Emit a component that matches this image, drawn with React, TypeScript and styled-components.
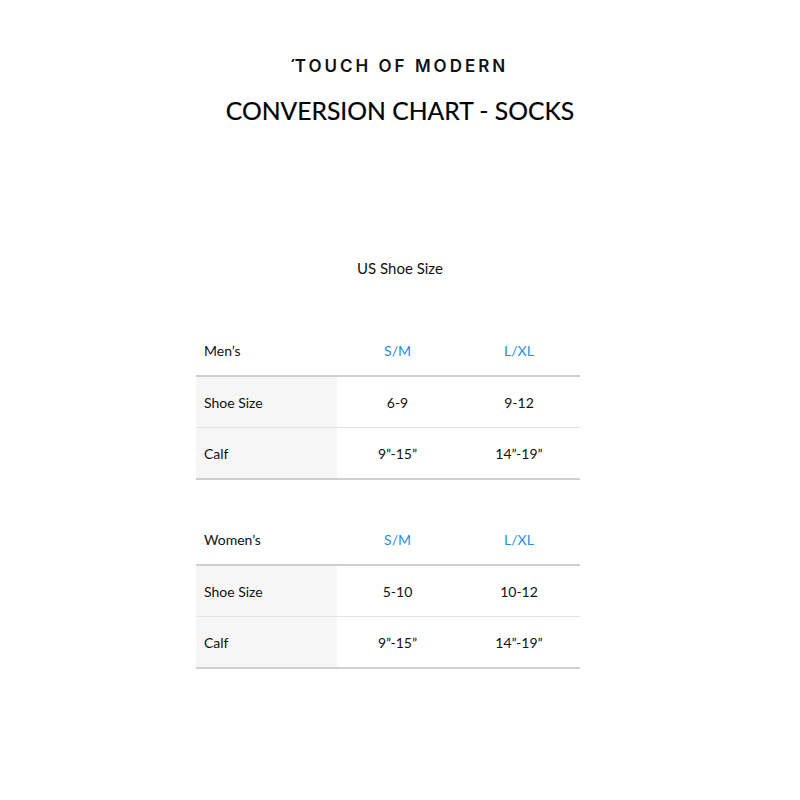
import styled, { createGlobalStyle } from "styled-components";

const GlobalStyle = createGlobalStyle`
  html, body {
    margin: 0;
    padding: 0;
    background: #fff;
  }
  body {
    font-family: Lato, "Open Sans", sans-serif;
    color: #111;
  }
`;

type Row = { label: string; sm: string; lxl: string };
type Chart = { title: string; rows: Row[] };

const charts: Chart[] = [
  {
    title: "Men’s",
    rows: [
      { label: "Shoe Size", sm: "6-9", lxl: "9-12" },
      { label: "Calf", sm: "9”-15”", lxl: "14”-19”" },
    ],
  },
  {
    title: "Women’s",
    rows: [
      { label: "Shoe Size", sm: "5-10", lxl: "10-12" },
      { label: "Calf", sm: "9”-15”", lxl: "14”-19”" },
    ],
  },
];

const Page = styled.div`
  width: 800px;
  height: 800px;
  display: flex;
  flex-direction: column;
  align-items: center;
  padding-top: 56px;
  box-sizing: border-box;
`;

const Logo = styled.div`
  font-family: Inter, "Liberation Sans", sans-serif;
  font-weight: 600;
  font-size: 17px;
  letter-spacing: 3px;
  line-height: 20px;
  color: #111;
  position: relative;
  padding-left: 3px;
  .tick {
    position: absolute;
    left: 0;
    top: 3px;
    width: 2px;
    height: 3px;
    background: #111;
    transform: skewX(-25deg);
  }
`;

const Title = styled.h1`
  margin: 17px 0 0;
  font-family: Lato, "Open Sans", sans-serif;
  font-weight: 400;
  font-size: 24.7px;
  line-height: 36px;
  color: #000;
  -webkit-text-stroke: 0.2px #000;
`;

const Subtitle = styled.div`
  margin-top: 129px;
  font-size: 15px;
  line-height: 20px;
  color: #111;
`;

const Table = styled.div<{ $first?: boolean }>`
  width: 384px;
  margin: ${({ $first }) => ($first ? "47px" : "34px")} 24px 0 0;
  display: grid;
  grid-template-columns: 141px 121px 122px;
  border-bottom: 2px solid #cfcfcf;
`;

const Cell = styled.div<{ $kind?: "head" | "label" | "value"; $blue?: boolean; $last?: boolean; $headRow?: boolean }>`
  height: 50px;
  display: flex;
  align-items: center;
  justify-content: ${({ $kind }) => ($kind === "value" ? "center" : "flex-start")};
  padding-left: ${({ $kind }) => ($kind === "value" ? "0" : "8px")};
  font-size: 14px;
  color: ${({ $blue }) => ($blue ? "#1f8fe3" : "#111")};
  background: ${({ $kind }) => ($kind === "label" ? "#f6f6f6" : "#fff")};
  border-bottom: ${({ $headRow, $last }) =>
    $headRow ? "2px solid #cfcfcf" : $last ? "none" : "1px solid #e4e4e4"};
`;

export default function App() {
  return (
    <>
      <GlobalStyle />
      <Page>
        <Logo>
          <span className="tick" />
          TOUCH OF MODERN
        </Logo>
        <Title>CONVERSION CHART - SOCKS</Title>
        <Subtitle>US Shoe Size</Subtitle>
        {charts.map((chart, i) => (
          <Table key={chart.title} $first={i === 0}>
            <Cell $headRow>{chart.title}</Cell>
            <Cell $headRow $kind="value" $blue>
              S/M
            </Cell>
            <Cell $headRow $kind="value" $blue>
              L/XL
            </Cell>
            {chart.rows.map((row, r) => {
              const last = r === chart.rows.length - 1;
              return (
                <>
                  <Cell key={row.label + "l"} $kind="label" $last={last}>
                    {row.label}
                  </Cell>
                  <Cell key={row.label + "s"} $kind="value" $last={last}>
                    {row.sm}
                  </Cell>
                  <Cell key={row.label + "x"} $kind="value" $last={last}>
                    {row.lxl}
                  </Cell>
                </>
              );
            })}
          </Table>
        ))}
      </Page>
    </>
  );
}
